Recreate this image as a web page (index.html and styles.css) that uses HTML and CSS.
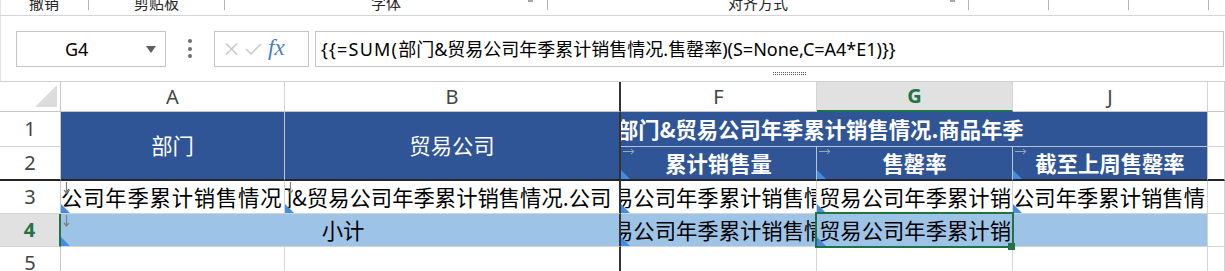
FILE: index.html
```html
<!DOCTYPE html>
<html lang="zh-CN">
<head>
<meta charset="utf-8">
<title>Sheet</title>
<link rel="stylesheet" href="styles.css">
</head>
<body>
<div class="ribbon">
  <div class="grp g1"><span class="glabel">撤销</span></div>
  <div class="grp g2"><span class="glabel">剪贴板</span></div>
  <div class="grp g3"><span class="glabel">字体</span><i class="launcher l3"></i></div>
  <div class="grp g4"><span class="glabel">对齐方式</span><i class="launcher l4"></i></div>
  <div class="grp g5"></div>
  <div class="grp g6"></div>
  <div class="grp g7"></div>
  <div class="grp g8"></div>
</div>

<div class="fbar">
  <div class="fbar-row">
    <div class="namebox">
      <span class="cellref">G4</span>
      <svg class="dd" viewBox="0 0 10 7"><path d="M0 0H10L5 7Z" fill="#5f5f5f"/></svg>
    </div>
    <div class="vdots"><i></i><i></i><i></i></div>
    <div class="fxbox">
      <svg class="ico-x" viewBox="0 0 13 12"><path d="M1 0.5L12 11.5M12 0.5L1 11.5" fill="none" stroke="#c8c8c8" stroke-width="1.5"/></svg>
      <svg class="ico-ok" viewBox="0 0 17 12"><path d="M1 6L6 11L16 1" fill="none" stroke="#c8c8c8" stroke-width="1.5"/></svg>
      <span class="fx">fx</span>
    </div>
    <div class="formula"><span class="lead">{{=SUM(</span>部门&amp;贸易公司年季累计销售情况.售罄率)(S=None,C=A4*E1)}}</div>
  </div>
  <div class="grip"></div>
</div>

<div class="sheet">
  <!-- column headers -->
  <div class="corner"></div>
  <div class="ch">A</div>
  <div class="ch frz">B</div>
  <div class="ch">F</div>
  <div class="ch sel">G</div>
  <div class="ch">J</div>
  <div class="ch"></div>

  <!-- row 1 -->
  <div class="rh">1</div>
  <div class="hd hd-main">部门</div>
  <div class="hd hd-main frz">贸易公司</div>
  <div class="hd hd-top"><span class="top-text">部门&amp;贸易公司年季累计销售情况.商品年季</span></div>
  <div class="c"></div>

  <!-- row 2 -->
  <div class="rh r2">2</div>
  <div class="hd hd-sub">
    <svg class="mk-right" viewBox="0 0 12 7"><path d="M0 3.5H11M8 1L11 3.5L8 6" fill="none" stroke="#9ba6b8" stroke-width="1"/></svg>
    累计销售量<i class="mk-tri"></i>
  </div>
  <div class="hd hd-sub">
    <svg class="mk-right" viewBox="0 0 12 7"><path d="M0 3.5H11M8 1L11 3.5L8 6" fill="none" stroke="#9ba6b8" stroke-width="1"/></svg>
    售罄率<i class="mk-tri"></i>
  </div>
  <div class="hd hd-sub">
    <svg class="mk-right" viewBox="0 0 12 7"><path d="M0 3.5H11M8 1L11 3.5L8 6" fill="none" stroke="#9ba6b8" stroke-width="1"/></svg>
    截至上周售罄率<i class="mk-tri"></i>
  </div>
  <div class="c r2"></div>

  <!-- row 3 -->
  <div class="rh">3</div>
  <div class="c wide-a">
    <svg class="mk-down" viewBox="0 0 7 12"><path d="M3.5 0V11M1 8L3.5 11L6 8" fill="none" stroke="#7f7f7f" stroke-width="1.2"/></svg>
    <i class="mk-tri"></i>公司年季累计销售情况
  </div>
  <div class="c frz shift-b">
    <svg class="mk-down" viewBox="0 0 7 12"><path d="M3.5 0V11M1 8L3.5 11L6 8" fill="none" stroke="#7f7f7f" stroke-width="1.2"/></svg>
    <i class="mk-tri"></i>门&amp;贸易公司年季累计销售情况.公司
  </div>
  <div class="c shift-f"><i class="mk-tri"></i>易公司年季累计销售情况</div>
  <div class="c shift-g"><i class="mk-tri"></i>贸易公司年季累计销售情况</div>
  <div class="c"><i class="mk-tri"></i>公司年季累计销售情</div>
  <div class="c"></div>

  <!-- row 4 -->
  <div class="rh sel">4</div>
  <div class="c fill merged frz">
    <svg class="mk-down" viewBox="0 0 7 12"><path d="M3.5 0V11M1 8L3.5 11L6 8" fill="none" stroke="#7f7f7f" stroke-width="1.2"/></svg>
    <i class="mk-tri"></i>小计
  </div>
  <div class="c fill shift-f"><i class="mk-tri"></i>易公司年季累计销售情况</div>
  <div class="c fill shift-g"><i class="mk-tri"></i>贸易公司年季累计销售情况</div>
  <div class="c fill"></div>
  <div class="c"></div>

  <!-- row 5 -->
  <div class="rh">5</div>
  <div class="c"></div>
  <div class="c frz"></div>
  <div class="c"></div>
  <div class="c"></div>
  <div class="c"></div>
  <div class="c"></div>

  <div class="selbox"></div>
  <div class="selhandle"></div>
</div>
</body>
</html>
```

FILE: styles.css
```css
* { box-sizing: border-box; }
html, body { margin: 0; padding: 0; background: #fff; }
body {
  width: 1225px;
  height: 271px;
  overflow: hidden;
  font-family: "Noto Sans", "Noto Sans CJK SC", sans-serif;
  color: #000;
}

/* ribbon strip */
.ribbon {
  display: flex;
  height: 16px;
  border-bottom: 1px solid #d5d5d5;
  overflow: hidden;
  box-shadow: inset 1px 0 #e3e3e3;
}
.grp {
  position: relative;
  flex: none;
  display: flex;
  justify-content: center;
  align-items: flex-start;
  height: 10px;
  border-right: 1px solid #b4b4b4;
}
.g1 { width: 89px; }
.g2 { width: 136px; }
.g3 { width: 323px; }
.g4 { width: 421px; }
.g5, .g6, .g7 { width: 80px; }
.g8 { flex: 1; border-right: 0; }
.glabel {
  margin-top: -5px;
  font: 15px/15px "Noto Sans CJK SC", sans-serif;
  color: #262626;
  white-space: nowrap;
}
.launcher {
  position: absolute;
  top: 0;
  width: 5px;
  height: 2px;
  background: #a6a6a6;
}
.l3 { right: 14px; }
.l4 { right: 13px; }

/* formula bar */
.fbar {
  height: 66px;
  padding-top: 15px;
  border-bottom: 1px solid #d0d0d0;
  box-shadow: inset 1px 0 #e3e3e3;
}
.fbar-row { display: flex; height: 36px; }
.namebox {
  margin-left: 16px;
  width: 150px;
  height: 36px;
  border: 1px solid #c6c6c6;
  display: flex;
  align-items: center;
  padding: 0 9px 0 48px;
}
.cellref { font: 18px/1 "Noto Sans", sans-serif; color: #000; }
.dd { margin-left: auto; width: 10px; height: 7px; }
.vdots {
  width: 48px;
  display: flex;
  flex-direction: column;
  align-items: center;
  gap: 3.5px;
  padding-top: 8px;
}
.vdots i { display: block; width: 4px; height: 4px; border-radius: 50%; background: #6e6e6e; }
.fxbox {
  width: 95px;
  border: 1px solid #c6c6c6;
  display: flex;
  align-items: center;
  padding-left: 10px;
}
.ico-x { width: 13px; height: 12px; }
.ico-ok { width: 17px; height: 12px; margin-left: 7px; }
.fx {
  margin-left: 6px;
  font: italic 23px/1 "Liberation Serif", serif;
  color: #4a7dc4;
  margin-top: -4px;
}
.formula {
  margin-left: 6px;
  width: 909px;
  border: 1px solid #c6c6c6;
  padding-left: 5px;
  font: 18px/34px "Noto Sans", "Noto Sans CJK SC", sans-serif;
  white-space: nowrap;
  overflow: hidden;
}
.lead { letter-spacing: 1.2px; }
.grip {
  margin: 5px 0 0 772px;
  width: 35px;
  height: 4px;
  background: conic-gradient(#5a5a5a 25%, transparent 0) 0 0 / 2px 2px;
}

/* sheet */
.sheet {
  position: relative;
  display: grid;
  grid-template-columns: 61px 224px 336px 196px 196px 195px 1fr;
  grid-template-rows: 30px 35px 34px 33px 33px 33px;
}
.corner {
  position: relative;
  border-right: 1px solid #c6c6c6;
  border-bottom: 1px solid #c6c6c6;
}
.corner::after {
  content: "";
  position: absolute;
  right: 3px;
  bottom: 4px;
  width: 22px;
  height: 22px;
  background: #dcdcdc;
  clip-path: polygon(100% 0, 100% 100%, 0 100%);
}
.ch {
  display: flex;
  align-items: center;
  justify-content: center;
  border-right: 1px solid #d4d4d4;
  border-bottom: 1px solid #c6c6c6;
  font: 20px/1 "Noto Sans", sans-serif;
  color: #444;
}
.ch.sel {
  background: #e1e1e1;
  border-bottom: 2px solid #217346;
  color: #217346;
  font-weight: 700;
}
.rh {
  display: flex;
  align-items: center;
  justify-content: center;
  border-right: 1px solid #c6c6c6;
  border-bottom: 1px solid #d4d4d4;
  font: 20px/1 "Noto Sans", sans-serif;
  color: #444;
}
.rh.sel {
  background: #e1e1e1;
  border-right: 2px solid #217346;
  color: #217346;
  font-weight: 700;
}

/* blue headers */
.hd {
  position: relative;
  display: flex;
  align-items: center;
  justify-content: center;
  overflow: hidden;
  white-space: nowrap;
  background: #2f5597;
  color: #fff;
  font: 21.33px/1 "Noto Sans CJK SC", sans-serif;
  border-right: 1px solid #b9c3d3;
  border-bottom: 1px solid #b9c3d3;
}
.hd-main { grid-row: span 2; border-bottom: 2px solid #262626; padding-bottom: 1px; }
.hd-top { grid-column: span 3; justify-content: flex-start; font-weight: 700; }
.top-text { margin-left: -4px; }
.hd-sub { font-weight: 700; border-bottom: 2px solid #262626; }

/* data cells */
.c {
  position: relative;
  overflow: hidden;
  white-space: nowrap;
  border-right: 1px solid #d4d4d4;
  border-bottom: 1px solid #d4d4d4;
  font: 21.33px/31px "Noto Sans CJK SC", sans-serif;
  color: #000;
}
.fill { background: #9dc3e6; }
.merged { grid-column: span 2; text-align: center; padding-left: 6px; }
.wide-a { letter-spacing: 0.8px; }
.shift-b { text-indent: -14px; }
.shift-f { text-indent: -9px; }
.shift-g { text-indent: 2px; }

.r2 { border-bottom: 2px solid #262626; }
.sheet .frz { border-right: 2px solid #333; }

/* markers */
.mk-tri {
  position: absolute;
  left: 0;
  bottom: 0;
  width: 9px;
  height: 9px;
  background: #3f8de6;
  clip-path: polygon(0 0, 0 100%, 100% 100%);
}
.mk-down { position: absolute; left: 2px; top: 1px; width: 7px; height: 12px; }
.mk-right { position: absolute; left: 2px; top: 1px; width: 12px; height: 7px; }

/* selection overlay */
.selbox {
  position: absolute;
  left: 815px;
  top: 130px;
  width: 199px;
  height: 36px;
  border: 2px solid #217346;
  pointer-events: none;
}
.selhandle {
  position: absolute;
  left: 1008px;
  top: 161px;
  width: 7px;
  height: 7px;
  background: #217346;
}
```
